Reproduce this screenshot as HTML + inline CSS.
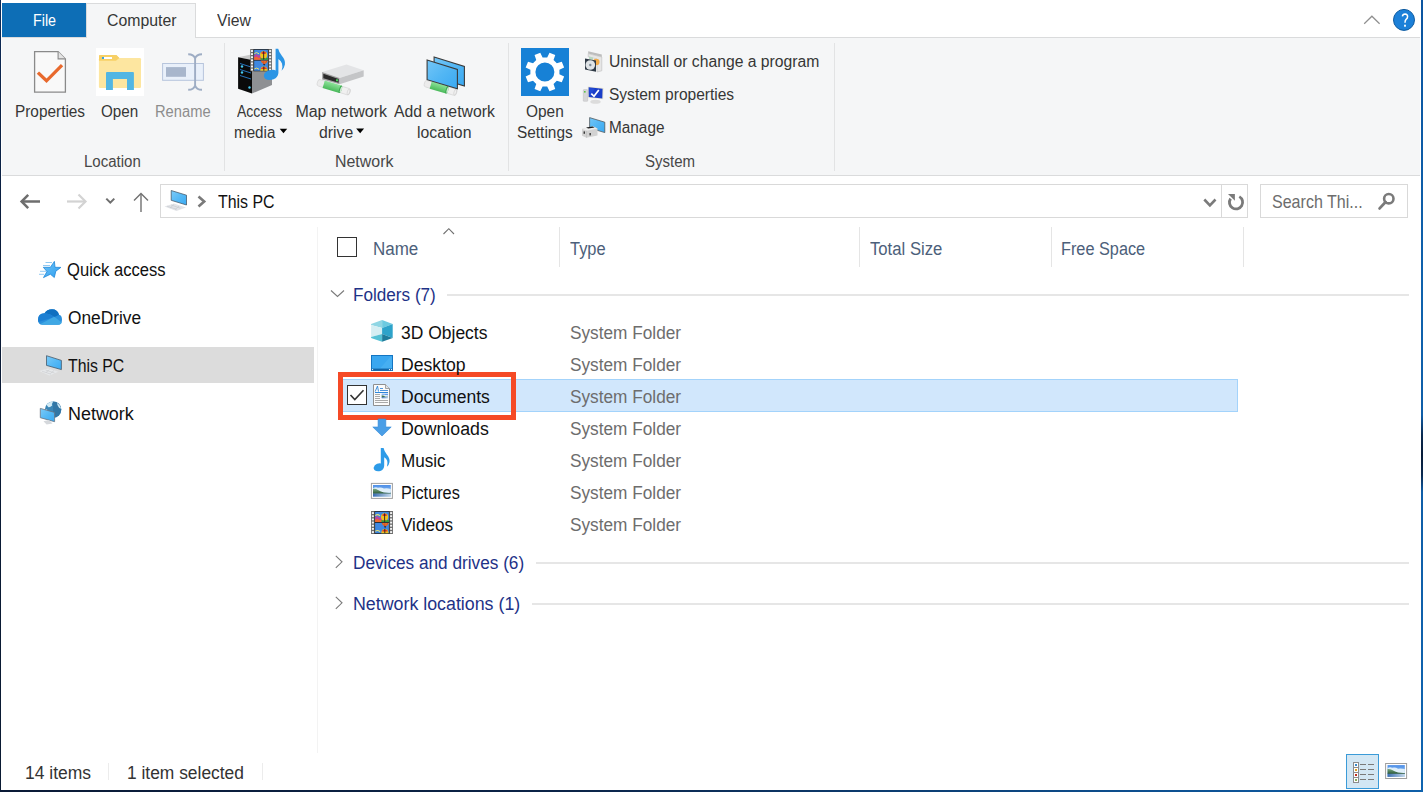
<!DOCTYPE html>
<html><head><meta charset="utf-8"><style>
*{margin:0;padding:0;box-sizing:border-box}
html,body{width:1423px;height:792px;overflow:hidden}
body{position:relative;background:#0d5aa0;font-family:"Liberation Sans",sans-serif}
.a{position:absolute}
.t{position:absolute;white-space:nowrap;transform-origin:0 0}
svg{position:absolute;overflow:visible}

</style></head><body>
<!-- desktop edges -->
<div class="a" style="left:0;top:0;width:1px;height:792px;background:linear-gradient(180deg,#0f2c58 0px,#0b2246 150px,#0a1a36 300px,#0a1a33 792px)"></div>
<div class="a" style="left:0;top:790px;width:1423px;height:2px;background:linear-gradient(90deg,#0a1a36 0%,#0b2448 40%,#0d4f8f 80%,#0f5fa8 100%)"></div>
<div class="a" style="left:1421px;top:0;width:2px;height:792px;background:linear-gradient(180deg,#0b55a0 0px,#0f62ad 300px,#0f5ea8 415px,#0a2a50 435px,#071c38 455px,#0a2a50 475px,#0f5ea8 492px,#0f64b0 792px)"></div>
<!-- window -->
<div class="a" style="left:1px;top:0;width:1420px;height:790px;background:#ffffff"></div>
<!-- tab bar line -->
<div class="a" style="left:2px;top:37px;width:1418px;height:1px;background:#dadbdc"></div>
<!-- ribbon -->
<div class="a" style="left:2px;top:38px;width:1418px;height:137px;background:#f5f6f7"></div>
<div class="a" style="left:2px;top:175px;width:1418px;height:1px;background:#dadbdc"></div>
<!-- File tab -->
<div class="a" style="left:2px;top:3px;width:84px;height:34px;background:#0d6eb6"></div>
<!-- Computer tab -->
<div class="a" style="left:86px;top:3px;width:110px;height:35px;background:#f5f6f7;border:1px solid #dadbdc;border-bottom:none"></div>
<!-- ribbon separators -->
<div class="a" style="left:224px;top:43px;width:1px;height:128px;background:#e2e3e4"></div>
<div class="a" style="left:508px;top:43px;width:1px;height:128px;background:#e2e3e4"></div>
<div class="a" style="left:834px;top:43px;width:1px;height:128px;background:#e2e3e4"></div>
<!-- address box -->
<div class="a" style="left:160px;top:184px;width:1088px;height:34px;border:1px solid #d9d9d9"></div>
<div class="a" style="left:1221px;top:184px;width:1px;height:34px;background:#d9d9d9"></div>
<!-- search box -->
<div class="a" style="left:1260px;top:184px;width:148px;height:34px;border:1px solid #d9d9d9"></div>
<!-- nav separator -->
<div class="a" style="left:317px;top:227px;width:1px;height:526px;background:#f3f3f3"></div>
<!-- nav selection -->
<div class="a" style="left:2px;top:347px;width:312px;height:36px;background:#dcdcdc"></div>
<!-- column dividers -->
<div class="a" style="left:559px;top:227px;width:1px;height:40px;background:#e5e5e5"></div>
<div class="a" style="left:859px;top:227px;width:1px;height:40px;background:#e5e5e5"></div>
<div class="a" style="left:1051px;top:227px;width:1px;height:40px;background:#e5e5e5"></div>
<div class="a" style="left:1243px;top:227px;width:1px;height:40px;background:#e5e5e5"></div>
<!-- header checkbox -->
<div class="a" style="left:337px;top:237px;width:20px;height:20px;border:1.5px solid #333"></div>
<!-- group lines -->
<div class="a" style="left:447px;top:294px;width:962px;height:2px;background:#e6e6e6"></div>
<div class="a" style="left:536px;top:562px;width:873px;height:2px;background:#e6e6e6"></div>
<div class="a" style="left:532px;top:603px;width:877px;height:2px;background:#e6e6e6"></div>
<!-- selection row -->
<div class="a" style="left:338px;top:379px;width:900px;height:33px;background:#d1e7fc;border:1px solid #a3d3fb"></div>
<!-- row checkbox -->
<div class="a" style="left:347px;top:385px;width:20px;height:20px;border:1.5px solid #333;background:#fff"></div>
<svg style="left:0;top:0" width="1" height="1"><path d="M350.5 395 L354.8 399.5 L363.5 390.3" fill="none" stroke="#333" stroke-width="1.6"/></svg>
<!-- red highlight -->
<div class="a" style="left:337.5px;top:371.5px;width:178px;height:48px;border:5px solid #f54a26"></div>
<!-- status bar separators -->
<div class="a" style="left:108px;top:763px;width:1px;height:17px;background:#ececec"></div>
<div class="a" style="left:262px;top:763px;width:1px;height:17px;background:#ececec"></div>
<!-- view buttons -->
<div class="a" style="left:1346px;top:754px;width:33px;height:35px;background:#d3e7f4;border:1px solid #3b9bd8"></div>

<svg style="left:0;top:0" width="1423" height="792" viewBox="0 0 1423 792">
<defs>
<linearGradient id="scr" x1="0" y1="0" x2="1" y2="1"><stop offset="0" stop-color="#74c6f7"/><stop offset="0.5" stop-color="#52b6f4"/><stop offset="1" stop-color="#3aa9f2"/></linearGradient>
<linearGradient id="grn" x1="0" y1="0" x2="0" y2="1"><stop offset="0" stop-color="#8ee39a"/><stop offset="1" stop-color="#49b95a"/></linearGradient>
<linearGradient id="sky" x1="0" y1="0" x2="0" y2="1"><stop offset="0" stop-color="#4d95e6"/><stop offset="0.35" stop-color="#d9ecf6"/><stop offset="0.55" stop-color="#8ab39a"/><stop offset="0.7" stop-color="#3f6f55"/><stop offset="0.8" stop-color="#4b7fb8"/><stop offset="1" stop-color="#9fc3e6"/></linearGradient>
<symbol id="film" viewBox="0 0 22 22.5" preserveAspectRatio="none">
<rect x="0" y="0" width="22" height="22.5" fill="#6f6f6f"/>
<g fill="#f4f4f4">
<rect x="0.9" y="1.1" width="2" height="1.8"/><rect x="0.9" y="4.2" width="2" height="1.8"/><rect x="0.9" y="7.3" width="2" height="1.8"/><rect x="0.9" y="10.4" width="2" height="1.8"/><rect x="0.9" y="13.5" width="2" height="1.8"/><rect x="0.9" y="16.6" width="2" height="1.8"/><rect x="0.9" y="19.7" width="2" height="1.8"/>
<rect x="19.1" y="1.1" width="2" height="1.8"/><rect x="19.1" y="4.2" width="2" height="1.8"/><rect x="19.1" y="7.3" width="2" height="1.8"/><rect x="19.1" y="10.4" width="2" height="1.8"/><rect x="19.1" y="13.5" width="2" height="1.8"/><rect x="19.1" y="16.6" width="2" height="1.8"/><rect x="19.1" y="19.7" width="2" height="1.8"/>
</g>
<rect x="3.4" y="0" width="15.2" height="22.5" fill="#2a2a2a"/>
<rect x="4.1" y="0.8" width="13.8" height="10" fill="#3f88e0"/>
<rect x="4.1" y="11.7" width="13.8" height="10" fill="#3f88e0"/>
<path d="M4.1,10.8 V6.5 Q6,3.5 8,6.5 Q9.5,5 11,7.5 V10.8Z" fill="#c0449a"/>
<path d="M4.1,10.8 V8.5 Q6.5,7 8.5,9 Q10,8 11.5,9.5 V10.8Z" fill="#f06a2a"/>
<path d="M4.3,4.5 Q6.5,2.5 9,4.8" fill="none" stroke="#e8e070" stroke-width="1"/>
<rect x="10.5" y="8.8" width="7.4" height="2" fill="#2f9a3c"/>
<circle cx="13.6" cy="5.9" r="3.6" fill="#f0c21c"/>
<path d="M11.2,3.6 Q13.6,1.6 16,3.6 L15.5,5 H11.7Z" fill="#e23a28"/>
<path d="M13.6,2.3 V9.5" stroke="#222" stroke-width="0.9"/>
<path d="M12.4,9.3 H14.8 L13.6,10.8Z" fill="#222"/>
<path d="M10.8,11.7 H17.9 Q17,14.5 14.2,15.2 Q11.5,14.5 10.8,11.7Z" fill="#e8a020"/>
<path d="M11.5,11.7 L12.5,14 M13.2,11.7 L13.6,15 M15,11.7 L14.8,15 M16.8,11.7 L15.8,14" stroke="#d8302a" stroke-width="0.8"/>
<path d="M13,15 H15.2 L14.1,16.8Z" fill="#222"/>
<path d="M4.3,20 Q6.5,18 9,20.3" fill="none" stroke="#e8e070" stroke-width="1"/>
<path d="M10.2,21.7 Q10.4,17.6 13.8,17.5 Q17.4,17.6 17.6,21.7Z" fill="#f0c21c"/>
<path d="M11,19.2 Q13.8,16.8 16.8,19.2 L16.5,20 H11.3Z" fill="#e23a28"/>
<path d="M13.8,17.5 V21.7" stroke="#222" stroke-width="0.9"/>
</symbol>
</defs>
<!-- ===== Properties ===== -->
<path d="M34.6,51.6 H58.1 L65.4,58.9 V92.2 H34.6 Z" fill="#f9f9f9" stroke="#8a8a8a" stroke-width="1.3"/>
<path d="M58.1,51.6 V58.9 H65.4" fill="#e4e4e4" stroke="#8a8a8a" stroke-width="1.1"/>
<polyline points="39.1,73.8 46.5,80.8 60.9,66.3" fill="none" stroke="#e8692d" stroke-width="3.3" stroke-linecap="square"/>
<!-- ===== Open ===== -->
<rect x="96" y="48" width="48" height="48" fill="#ffffff"/>
<path d="M99,56 Q99,54.9 100,54.9 H116.5 L119.3,57.9 L116.5,60.8 H99 Z" fill="#f7d066"/>
<rect x="98.9" y="58.1" width="42.1" height="29.8" rx="1.2" fill="#fde6a0"/>
<path d="M98.9,58.1 H116.5 L119.3,57.9 L119.3,58.1" fill="none"/>
<path d="M99,55.5 H116 L119.3,58 L116,60.8 H99Z" fill="#f7d066"/>
<rect x="102" y="57" width="10" height="2" fill="#ffffff"/><rect x="102" y="57" width="2" height="2" fill="#3aa3e0"/>
<path d="M106,89.9 V73 Q106,71.9 107,71.9 H133 Q133.9,71.9 133.9,73 V89.9 H127 V79 H112.9 V89.9 Z" fill="#52b6e3"/>
<!-- ===== Rename ===== -->
<rect x="162.6" y="63.5" width="40.8" height="16.8" fill="#e9f0fa" stroke="#b7c5dc" stroke-width="1"/>
<rect x="166" y="67.1" width="20" height="9.7" fill="#a8b6cc"/>
<path d="M188.2,54.2 Q193.8,54.2 195.1,58.5 Q196.4,54.2 202,54.2 M195.1,58 V85.8 M188.2,89.8 Q193.8,89.8 195.1,85.5 Q196.4,89.8 202,89.8" fill="none" stroke="#9eadc4" stroke-width="1.9"/>
<!-- ===== Access media ===== -->
<path d="M238.1,57.3 L258,53 L272,54.5 L252,60 Z" fill="#c9c9c9"/>
<path d="M252,60 L272,54.5 V85 L252,93.5 Z" fill="#8e9093"/>
<path d="M238.1,57.3 L252,60 V93.5 L238.1,88.7 Z" fill="#0a0a0a"/>
<path d="M240,63.5 L251,67 M240,69.5 L251,73 M240,75.5 L251,79" stroke="#2a7fd0" stroke-width="0.9"/>
<circle cx="242" cy="66.5" r="1.2" fill="#45c8f0"/><circle cx="242" cy="72.5" r="1.2" fill="#45c8f0"/><circle cx="249.5" cy="87.5" r="1.2" fill="#45c8f0"/>
<use href="#film" x="250.1" y="49" width="21.9" height="22.5"/>
<path d="M275.6,48.8 H278.2 Q279,52.5 282,56 Q285.6,60 284.9,64.6 Q284.3,68.2 281.6,70.8 Q283,66.5 282,63.5 Q281,60.8 278.4,59 V73 Q278,77.6 273.6,79.3 Q268.6,80.9 265.2,78.7 Q262.5,75.9 265.2,72.6 Q268.3,69.6 273,69.8 Q274.6,69.9 275.6,70.4 Z" fill="#2b95e5"/>
<!-- ===== Map network drive ===== -->
<g transform="translate(317.5,82.3) rotate(17)">
<rect x="0" y="-3.3" width="7.5" height="6.6" rx="2" fill="#ececec" stroke="#d2d2d2" stroke-width="0.6"/>
<rect x="23" y="-3.3" width="11" height="6.6" rx="2.2" fill="#f0f0f0" stroke="#d2d2d2" stroke-width="0.6"/>
<ellipse cx="32.5" cy="0" rx="1.2" ry="3" fill="none" stroke="#cfcfcf" stroke-width="0.6"/>
<rect x="6.5" y="-3.9" width="17.5" height="7.8" fill="url(#grn)"/>
<ellipse cx="24" cy="0" rx="1.3" ry="3.9" fill="#3aa84d"/>
<ellipse cx="24.6" cy="0" rx="0.9" ry="3.2" fill="#cfe8d4"/>
</g>
<path d="M322.1,72 L346.5,64.4 L363.7,70.2 L339.6,77.9 Z" fill="#e3e4e6"/>
<path d="M339.6,77.9 L363.7,70.2 V76.6 L339.6,84.2 Z" fill="#c4c5c7"/>
<path d="M322.1,72 L339.6,77.9 V84.2 L322.1,79.5 Z" fill="#a0a0a0"/>
<path d="M323.3,73.8 L338.6,78.9 V82.8 L323.3,78.2 Z" fill="#2a2a2a"/>
<rect x="336" y="79.3" width="2" height="2" fill="#46d35a"/>
<!-- ===== Add network location ===== -->
<path d="M434.1,57 L464.4,66.4 V86.1 L434.1,76.8 Z" fill="url(#scr)" stroke="#3a3a3a" stroke-width="1.1"/>
<g transform="translate(424.5,83.2) rotate(16.5)">
<rect x="0" y="-3.3" width="7.5" height="6.6" rx="2" fill="#ececec" stroke="#d2d2d2" stroke-width="0.6"/>
<rect x="22.5" y="-3.3" width="11.0" height="6.6" rx="2.2" fill="#f0f0f0" stroke="#d2d2d2" stroke-width="0.6"/>
<ellipse cx="32.0" cy="0" rx="1.2" ry="3" fill="none" stroke="#cfcfcf" stroke-width="0.6"/>
<rect x="6.5" y="-3.9" width="17.0" height="7.8" fill="url(#grn)"/>
<ellipse cx="23.5" cy="0" rx="1.3" ry="3.9" fill="#3aa84d"/>
<ellipse cx="24.1" cy="0" rx="0.9" ry="3.2" fill="#cfe8d4"/>
</g>
<path d="M427.1,60 L457.4,69.4 V88.8 L427.1,79.7 Z" fill="url(#scr)" stroke="#3a3a3a" stroke-width="1.1"/>
<!-- ===== Settings ===== -->
<rect x="521" y="48" width="48" height="48" fill="#1781d6"/>
<path d="M559.42,74.30 L564.15,76.62 L561.78,82.35 L556.79,80.64 L553.54,83.89 L555.25,88.88 L549.52,91.25 L547.20,86.52 L542.60,86.52 L540.28,91.25 L534.55,88.88 L536.26,83.89 L533.01,80.64 L528.02,82.35 L525.65,76.62 L530.38,74.30 L530.38,69.70 L525.65,67.38 L528.02,61.65 L533.01,63.36 L536.26,60.11 L534.55,55.12 L540.28,52.75 L542.60,57.48 L547.20,57.48 L549.52,52.75 L555.25,55.12 L553.54,60.11 L556.79,63.36 L561.78,61.65 L564.15,67.38 L559.42,69.70Z M554.40,72 A9.5,9.5 0 1 0 535.40,72 A9.5,9.5 0 1 0 554.40,72Z" fill="#ffffff" fill-rule="evenodd"/>
<!-- ===== Uninstall ===== -->
<path d="M588.2,51.2 L601.8,54.6 L601.8,57 L588.2,53.6Z" fill="#bdbdbd"/>
<path d="M588.2,53.6 L601.8,57 V70.8 L597,72 V59 L588.2,56.8Z" fill="#e6e6e6" stroke="#b4b4b4" stroke-width="0.5"/>
<path d="M589,56.6 L593,57.5 L593,60 L589,59Z" fill="#b8d8c0"/>
<circle cx="596.2" cy="62" r="3.3" fill="#f2aa48"/>
<path d="M585,58.4 L596,60.6 V71.8 L585,69.4Z" fill="#2f3a46"/>
<circle cx="590.3" cy="65" r="4.8" fill="#dfe3e6"/>
<circle cx="590.3" cy="65" r="1.2" fill="#7d8a96"/>
<!-- ===== System properties ===== -->
<rect x="583.3" y="89.6" width="4.4" height="11.7" rx="0.6" fill="#d6d6d8" stroke="#b0b0b0" stroke-width="0.4"/>
<rect x="584" y="91" width="1.6" height="1.6" fill="#5cc048"/>
<ellipse cx="595.5" cy="101.8" rx="5.2" ry="2" fill="#dcdcdc"/>
<path d="M587.8,86.4 L603.6,88 L603.2,99.3 L588,97.8Z" fill="#e9e5d2"/>
<path d="M588.6,87.3 L602.6,88.7 L602.3,98.4 L588.7,97Z" fill="#1a3ec8"/>
<path d="M589,88 L595,88.6 L590,96Z" fill="#2a55e0" opacity="0.5"/>
<polyline points="591.3,93.6 594,96.3 598.8,89.9" fill="none" stroke="#ffffff" stroke-width="1.7"/>
<!-- ===== Manage ===== -->
<path d="M589.6,117.6 L604.8,122.2 V132.6 L589.6,128Z" fill="url(#scr)" stroke="#4a4a4a" stroke-width="0.7"/>
<path d="M582,128.8 L593,126.6 L597.5,128.6 V135.6 L586.5,137.8 L582,135.8Z" fill="#d2d2d2"/>
<path d="M582,128.8 L593,126.6 L597.5,128.6 L586.5,130.8Z" fill="#ededed"/>
<path d="M586,127.6 L592.6,126.4 L594.6,127.4 L588.2,128.6Z" fill="#1a1a1a"/>
<path d="M586.5,130.8 V137.8" stroke="#b8b8b8" stroke-width="0.5"/>
<rect x="583.6" y="131.4" width="1.3" height="2.4" fill="#2a2a2a"/><rect x="589.5" y="133" width="1.3" height="2.4" fill="#2a2a2a"/>
<!-- ===== collapse chevron & help ===== -->
<polyline points="1364.2,23.8 1371.9,16.2 1379.6,23.8" fill="none" stroke="#8f8f8f" stroke-width="1.2"/>
<circle cx="1404" cy="19.9" r="10.5" fill="#1c80d8" stroke="#0d5aa0" stroke-width="1"/>
<!-- ===== address bar ===== -->
<polyline points="28.2,194.8 21.6,201.5 28.2,208.2" fill="none" stroke="#6e6e6e" stroke-width="2.5"/>
<line x1="22" y1="201.5" x2="40" y2="201.5" stroke="#6e6e6e" stroke-width="2.5"/>
<polyline points="78.5,194.5 85.5,201.5 78.5,208.5" fill="none" stroke="#d3d3d3" stroke-width="2.2"/>
<line x1="67" y1="201.5" x2="85" y2="201.5" stroke="#d3d3d3" stroke-width="2.2"/>
<polyline points="106.3,198.6 110.3,202.6 114.3,198.6" fill="none" stroke="#6e6e6e" stroke-width="2"/>
<polyline points="134,200.5 141,193.5 148,200.5" fill="none" stroke="#707070" stroke-width="1.4"/>
<line x1="141" y1="194" x2="141" y2="212" stroke="#707070" stroke-width="1.4"/>
<polyline points="198.5,196.5 204.2,201.5 198.5,206.5" fill="none" stroke="#7a7a7a" stroke-width="2.6"/>
<polyline points="1204.3,199.5 1209.9,205.3 1215.5,199.5" fill="none" stroke="#7a7a7a" stroke-width="2.6"/>
<path d="M1239.3,196.6 A6.6,6.6 0 1 1 1230.6,198.6" fill="none" stroke="#7a7a7a" stroke-width="2.8"/>
<path d="M1228,194 H1234.9 V200.8 Z" fill="#7a7a7a"/>
<circle cx="1388.8" cy="198.7" r="4.7" fill="none" stroke="#7a7a7a" stroke-width="2.6"/>
<line x1="1385.6" y1="202" x2="1379.6" y2="208.4" stroke="#7a7a7a" stroke-width="2.8" stroke-linecap="round"/>
</svg>

<svg style="left:0;top:0" width="1423" height="792" viewBox="0 0 1423 792">
<defs>
<linearGradient id="scr2" x1="0" y1="0" x2="1" y2="1"><stop offset="0" stop-color="#7ccbf8"/><stop offset="0.5" stop-color="#56b9f5"/><stop offset="1" stop-color="#3aaaf3"/></linearGradient>
<linearGradient id="pic" x1="0" y1="0" x2="0" y2="1"><stop offset="0" stop-color="#4f95e4"/><stop offset="0.3" stop-color="#cfe6f5"/><stop offset="0.5" stop-color="#7fa88f"/><stop offset="0.62" stop-color="#3b6a52"/><stop offset="0.72" stop-color="#3d74b0"/><stop offset="1" stop-color="#a6c8e8"/></linearGradient>
<linearGradient id="star" x1="0" y1="0" x2="1" y2="1"><stop offset="0" stop-color="#6cc2f6"/><stop offset="1" stop-color="#2f9ff0"/></linearGradient>
<linearGradient id="skyg" x1="0" y1="0" x2="0" y2="1"><stop offset="0" stop-color="#4e8fe8"/><stop offset="1" stop-color="#a8d2f4"/></linearGradient>
<linearGradient id="hillg" x1="0" y1="0" x2="0" y2="1"><stop offset="0" stop-color="#78a882"/><stop offset="1" stop-color="#2a5636"/></linearGradient>
<linearGradient id="waterg" x1="0" y1="0" x2="1" y2="0"><stop offset="0" stop-color="#3a6cb0"/><stop offset="1" stop-color="#c4d8ea"/></linearGradient>
<symbol id="land" viewBox="0 0 18 12" preserveAspectRatio="none">
<rect x="0" y="0" width="18" height="12" fill="url(#skyg)"/>
<path d="M0,3.5 Q2.5,1.5 5,2.8 Q8,2 11,3.6 Q14.5,3 18,4 V8 H0Z" fill="#eaf5fb" opacity="0.9"/>
<path d="M0,4 Q2.5,3.6 5,5 Q8,7 11,7.6 Q14.5,8.2 18,8 V9 H0Z" fill="url(#hillg)"/>
<rect x="0" y="8.8" width="18" height="3.2" fill="url(#waterg)"/>
</symbol>
</defs>
<!-- dropdown triangles -->
<path d="M279.7,128.8 H287.2 L283.45,133.3Z" fill="#000"/>
<path d="M356.2,128.6 H364.1 L360.15,133.2Z" fill="#000"/>
<!-- help ? -->
<path d="M1402.4,16.4 Q1402.7,14 1405.1,14 Q1407.6,14.1 1407.6,16.6 Q1407.6,18.3 1406.1,19.4 Q1405,20.3 1405,22.7" fill="none" stroke="#fff" stroke-width="1.5"/>
<rect x="1404.1" y="24.7" width="1.8" height="2" fill="#fff"/>
<!-- address PC icon -->
<path d="M171.2,190.5 L186.5,195.2 V205 L171.2,200.3Z" fill="url(#scr2)" stroke="#3a4a5a" stroke-width="0.7"/>
<path d="M164.5,206.5 L174,203.5 L186,207.5 L176.5,211 Z" fill="#e2e4e8"/>
<path d="M167,206.2 L176.5,209.3 M171,205 L180.5,208.2 M170,208 L174,204.5 M175,209.7 L179,206" stroke="#c5c8cc" stroke-width="0.6"/>
<!-- sort arrow -->
<polyline points="443.5,234 448.8,228.7 454,234" fill="none" stroke="#707070" stroke-width="1.1"/>
<!-- group chevrons -->
<polyline points="331,290.5 337.5,296.5 344,290.5" fill="none" stroke="#7a7a7a" stroke-width="1.1"/>
<polyline points="335.8,555.8 342,561.8 335.8,567.8" fill="none" stroke="#7a7a7a" stroke-width="1.1"/>
<polyline points="335.8,596.8 342,602.8 335.8,608.8" fill="none" stroke="#7a7a7a" stroke-width="1.1"/>
<!-- ===== nav icons ===== -->
<g stroke="#69b5ee" stroke-width="0.9" opacity="0.8">
<line x1="45.5" y1="262.5" x2="52" y2="262.5"/><line x1="43" y1="265.5" x2="50" y2="265.5"/>
<line x1="40" y1="271.3" x2="46.5" y2="271.3"/><line x1="39" y1="274.3" x2="44" y2="274.3"/></g>
<path d="M54.4,261.4 L55,267.3 L60.9,267.4 L55.8,271.2 L54.3,277.5 L50.4,274.2 L43.5,277.6 L47,271.5 L43.3,267.3 L50.4,267.3 Z" fill="url(#star)" stroke="#1e86d8" stroke-width="0.8" stroke-linejoin="round"/>
<!-- OneDrive -->
<path d="M42.5,324.8 Q38,324.8 38,319.8 Q38,313.5 44.5,313.2 Q47,309.3 52,309.3 Q57.5,309.3 59,314.8 Q62,315.5 62,319.8 Q62,324.8 57.5,324.8 Z" fill="#2a8fdb"/>
<path d="M44.5,313.2 Q47,309.3 52,309.3 Q57.5,309.3 59,314.8 L54.5,317 Q50,313.5 44.5,313.2Z" fill="#0f6fc0"/>
<path d="M38.5,322 Q38,320.5 38,319.8 Q38,313.5 44.5,313.2 Q50,313.5 54.5,317 Z" fill="#1c7fd3"/>
<path d="M40.5,324 L54.2,316.8 L61.8,322.5 Q61,324.8 57.5,324.8 H42.5 Z" fill="#40a8e4"/>
<!-- This PC nav -->
<path d="M46.5,355.7 L61.4,360.4 V369.6 L46.5,365.4Z" fill="url(#scr2)" stroke="#3a4a5a" stroke-width="0.7"/>
<path d="M39,371 L48,368.5 L58.5,371.8 L49.5,375.5 Z" fill="#e6e8ea"/>
<path d="M42,371.2 L51,374.2 M45.5,370 L54.5,373 M46,372.5 L49.5,369.5 M50.5,373.5 L54,370.5" stroke="#c8cacc" stroke-width="0.6"/>
<!-- Network nav -->
<circle cx="53.1" cy="409.6" r="8.2" fill="#3b86b6"/>
<path d="M53.1,401.4 A8.2,8.2 0 0 1 61.3,409.6 A8.2,8.2 0 0 1 53.1,417.8Z" fill="#2f6f9e" opacity="0.7"/>
<path d="M46.5,404.6 Q49.5,401.6 53.2,401.5 Q51.5,403.6 52.2,405.6 Q50,407.6 48.5,407.2 Q47.2,406.2 46.5,404.6Z" fill="#d3ebf5"/>
<path d="M57,402.8 Q60.2,404.8 61.2,408.4 Q59.2,408.8 58.3,406.6 Q57.2,405 57,402.8Z" fill="#cfe8f3"/>
<path d="M45.3,409.5 Q46.5,409 47.5,410 L46.8,411.5Z" fill="#cfe8f3"/>
<path d="M40.3,408.4 L54.6,412.4 V421.7 L40.3,417.7Z" fill="url(#scr2)" stroke="#6a7480" stroke-width="0.8"/>
<path d="M43.5,421.3 L49,419.9 L52.5,423.6 L46.6,424.6Z" fill="#d5d8dc"/>
<!-- ===== file icons ===== -->
<path d="M371.1,324 L382.1,320 L382.1,328 L371.1,325Z" fill="#8fd6e4"/>
<path d="M382.1,320 L392.7,324 L382.1,328Z" fill="#6ccae0"/>
<path d="M371.1,325 L382.1,328 L382.1,334 L371.1,337Z" fill="#d5eef3"/>
<path d="M382.1,328 L392.7,324 L392.7,338 L382.1,334Z" fill="#2da3ca"/>
<path d="M371.1,337 L382.1,334 L382.1,341.8 L371.1,338Z" fill="#55c1d5"/>
<path d="M382.1,334 L392.7,338 L382.1,341.8Z" fill="#1e7c9b"/>
<!-- desktop -->
<rect x="371.5" y="355.5" width="21" height="15" fill="#3aa7f0" stroke="#1475c2" stroke-width="1"/>
<path d="M380,368.5 L390,357 H392 V368.5Z" fill="#4fb4f4" opacity="0.6"/>
<rect x="371.5" y="368.6" width="21" height="2" fill="#1565a6"/>
<circle cx="372.6" cy="369.6" r="0.6" fill="#fff"/><circle cx="389.5" cy="369.6" r="0.6" fill="#fff"/><circle cx="391.5" cy="369.6" r="0.6" fill="#fff"/>
<!-- doc icon -->
<path d="M373.5,384.5 H385.5 L389.5,388.5 V405.5 H373.5 Z" fill="#fbfbfb" stroke="#8f8f8f" stroke-width="1"/>
<path d="M385.5,384.5 V388.5 H389.5" fill="#e2e2e2" stroke="#8f8f8f" stroke-width="0.8"/>
<path d="M375.2,391.5 L377.5,386 L378.5,391.5" fill="none" stroke="#2f86d8" stroke-width="0.9"/>
<rect x="380" y="388" width="3" height="1" fill="#4f95dc"/>
<rect x="380" y="390" width="8" height="1" fill="#4f95dc"/>
<rect x="375" y="392" width="13" height="1" fill="#2f86d8"/>
<g fill="#a9a9a9"><rect x="375" y="394" width="5" height="1"/><rect x="375" y="396" width="5" height="1"/><rect x="375" y="398" width="5" height="1"/><rect x="375" y="400" width="13" height="1"/><rect x="375" y="402" width="13" height="1"/></g>
<use href="#land" x="381.5" y="393.5" width="6.5" height="5"/>
<!-- downloads -->
<path d="M378.1,419 H385.8 V427 H391.2 L382,436 L372.8,427 H378.1Z" fill="#4a9ee6" stroke="#2f86d6" stroke-width="0.6"/>
<!-- music -->
<path d="M380.8,448 H383.6 Q384.3,451.5 386.8,454.5 Q390,458.2 389.5,462 Q389.1,465 386.9,466.8 Q388,463.2 387.2,460.8 Q386.4,458.6 384.2,457.2 V465.8 Q384,469.8 380.3,471 Q376.4,471.8 374.4,470 Q372.8,467.6 374.8,465.2 Q377.2,463 380.8,463.4 Z" fill="#2d9be8"/>
<!-- pictures -->
<rect x="371.4" y="483.4" width="21" height="15" fill="#fff" stroke="#a0a0a0" stroke-width="1"/>
<use href="#land" x="373" y="485" width="17.9" height="11.8"/>
<!-- videos -->
<use href="#film" x="371" y="511" width="22" height="23"/>
<!-- ===== view buttons ===== -->
<rect x="1353" y="762" width="6" height="21" fill="#8c8c8c"/>
<rect x="1354" y="763" width="4" height="4" fill="#fff"/><rect x="1354" y="768" width="4" height="4" fill="#fff"/><rect x="1354" y="773" width="4" height="4" fill="#fff"/><rect x="1354" y="778" width="4" height="4" fill="#fff"/>
<rect x="1355" y="764" width="2" height="2" fill="#3a8ac8"/><rect x="1355" y="769" width="2" height="2" fill="#e0a020"/><rect x="1355" y="774" width="2" height="2" fill="#c03020"/><rect x="1355" y="779" width="2" height="2" fill="#88b060"/>
<g fill="#7a7a7a"><rect x="1360" y="764" width="6" height="1"/><rect x="1368" y="764" width="6" height="1"/><rect x="1360" y="769" width="6" height="1"/><rect x="1368" y="769" width="6" height="1"/><rect x="1360" y="774" width="6" height="1"/><rect x="1368" y="774" width="6" height="1"/><rect x="1360" y="779" width="6" height="1"/><rect x="1368" y="779" width="6" height="1"/></g>
<rect x="1385.6" y="763.5" width="21" height="15" fill="#fff" stroke="#9d9d9d" stroke-width="1"/>
<use href="#land" x="1387.3" y="765.1" width="17.6" height="11.8"/>
</svg>

<div class="t" style="left:33.00px;top:13px;font-size:16px;line-height:16px;color:#ffffff;transform:scaleX(0.8932);">File</div>
<div class="t" style="left:106.50px;top:13px;font-size:16px;line-height:16px;color:#363636;transform:scaleX(0.9893);">Computer</div>
<div class="t" style="left:217.00px;top:13px;font-size:16px;line-height:16px;color:#363636;transform:scaleX(0.9855);">View</div>
<div class="t" style="left:14.60px;top:104px;font-size:16px;line-height:16px;color:#363636;transform:scaleX(0.9605);">Properties</div>
<div class="t" style="left:100.50px;top:104px;font-size:16px;line-height:16px;color:#363636;transform:scaleX(0.9508);">Open</div>
<div class="t" style="left:155.00px;top:104px;font-size:16px;line-height:16px;color:#8d8d8d;transform:scaleX(0.9190);">Rename</div>
<div class="t" style="left:237.20px;top:104px;font-size:16px;line-height:16px;color:#363636;transform:scaleX(0.8755);">Access</div>
<div class="t" style="left:233.80px;top:125px;font-size:16px;line-height:16px;color:#363636;transform:scaleX(0.9490);">media</div>
<div class="t" style="left:295.40px;top:104px;font-size:16px;line-height:16px;color:#363636;">Map network</div>
<div class="t" style="left:318.80px;top:125px;font-size:16px;line-height:16px;color:#363636;transform:scaleX(0.9848);">drive</div>
<div class="t" style="left:394.20px;top:104px;font-size:16px;line-height:16px;color:#363636;transform:scaleX(0.9856);">Add a network</div>
<div class="t" style="left:417.30px;top:125px;font-size:16px;line-height:16px;color:#363636;transform:scaleX(0.9868);">location</div>
<div class="t" style="left:526.30px;top:104px;font-size:16px;line-height:16px;color:#363636;transform:scaleX(0.9636);">Open</div>
<div class="t" style="left:517.20px;top:125px;font-size:16px;line-height:16px;color:#363636;transform:scaleX(0.9624);">Settings</div>
<div class="t" style="left:609.40px;top:54px;font-size:16px;line-height:16px;color:#363636;transform:scaleX(0.9810);">Uninstall or change a program</div>
<div class="t" style="left:609.40px;top:87px;font-size:16px;line-height:16px;color:#363636;transform:scaleX(0.9705);">System properties</div>
<div class="t" style="left:609.40px;top:120px;font-size:16px;line-height:16px;color:#363636;transform:scaleX(0.9590);">Manage</div>
<div class="t" style="left:84.40px;top:154px;font-size:16px;line-height:16px;color:#474747;transform:scaleX(0.9388);">Location</div>
<div class="t" style="left:335.10px;top:154px;font-size:16px;line-height:16px;color:#474747;transform:scaleX(0.9957);">Network</div>
<div class="t" style="left:644.60px;top:154px;font-size:16px;line-height:16px;color:#474747;transform:scaleX(0.9386);">System</div>
<div class="t" style="left:217.90px;top:193px;font-size:18.5px;line-height:18.5px;color:#111111;transform:scaleX(0.8593);">This PC</div>
<div class="t" style="left:1271.60px;top:193px;font-size:18.5px;line-height:18.5px;color:#6d6d6d;transform:scaleX(0.8670);">Search Thi...</div>
<div class="t" style="left:373.20px;top:240px;font-size:18px;line-height:18px;color:#4c607a;transform:scaleX(0.9438);">Name</div>
<div class="t" style="left:570.30px;top:240px;font-size:18px;line-height:18px;color:#4c607a;transform:scaleX(0.9128);">Type</div>
<div class="t" style="left:869.50px;top:240px;font-size:18px;line-height:18px;color:#4c607a;transform:scaleX(0.9269);">Total Size</div>
<div class="t" style="left:1061.40px;top:240px;font-size:18px;line-height:18px;color:#4c607a;transform:scaleX(0.9043);">Free Space</div>
<div class="t" style="left:353.10px;top:286px;font-size:18px;line-height:18px;color:#1e3287;transform:scaleX(0.9517);">Folders (7)</div>
<div class="t" style="left:353.30px;top:554px;font-size:18px;line-height:18px;color:#1e3287;transform:scaleX(0.9558);">Devices and drives (6)</div>
<div class="t" style="left:353.30px;top:595px;font-size:18px;line-height:18px;color:#1e3287;transform:scaleX(0.9892);">Network locations (1)</div>
<div class="t" style="left:401.00px;top:324px;font-size:18px;line-height:18px;color:#111;transform:scaleX(0.9708);">3D Objects</div>
<div class="t" style="left:401.40px;top:356px;font-size:18px;line-height:18px;color:#111;transform:scaleX(0.9788);">Desktop</div>
<div class="t" style="left:401.40px;top:388px;font-size:18px;line-height:18px;color:#111;transform:scaleX(0.9758);">Documents</div>
<div class="t" style="left:401.40px;top:420px;font-size:18px;line-height:18px;color:#111;transform:scaleX(0.9854);">Downloads</div>
<div class="t" style="left:401.40px;top:452px;font-size:18px;line-height:18px;color:#111;transform:scaleX(0.9489);">Music</div>
<div class="t" style="left:401.40px;top:484px;font-size:18px;line-height:18px;color:#111;transform:scaleX(0.9046);">Pictures</div>
<div class="t" style="left:401.00px;top:516px;font-size:18px;line-height:18px;color:#111;transform:scaleX(0.9516);">Videos</div>
<div class="t" style="left:67.40px;top:261px;font-size:18px;line-height:18px;color:#111;transform:scaleX(0.9215);">Quick access</div>
<div class="t" style="left:67.50px;top:309px;font-size:18px;line-height:18px;color:#111;transform:scaleX(0.9605);">OneDrive</div>
<div class="t" style="left:67.50px;top:357px;font-size:18px;line-height:18px;color:#111;transform:scaleX(0.8781);">This PC</div>
<div class="t" style="left:67.50px;top:405px;font-size:18px;line-height:18px;color:#111;transform:scaleX(0.9966);">Network</div>
<div class="t" style="left:25.20px;top:764px;font-size:18px;line-height:18px;color:#333333;transform:scaleX(0.9706);">14 items</div>
<div class="t" style="left:127.30px;top:764px;font-size:18px;line-height:18px;color:#333333;transform:scaleX(0.9659);">1 item selected</div>
<div class="t" style="left:569.60px;top:324px;font-size:18px;line-height:18px;color:#6d6d6d;transform:scaleX(0.9569);">System Folder</div>
<div class="t" style="left:569.60px;top:356px;font-size:18px;line-height:18px;color:#6d6d6d;transform:scaleX(0.9569);">System Folder</div>
<div class="t" style="left:569.60px;top:388px;font-size:18px;line-height:18px;color:#6d6d6d;transform:scaleX(0.9569);">System Folder</div>
<div class="t" style="left:569.60px;top:420px;font-size:18px;line-height:18px;color:#6d6d6d;transform:scaleX(0.9569);">System Folder</div>
<div class="t" style="left:569.60px;top:452px;font-size:18px;line-height:18px;color:#6d6d6d;transform:scaleX(0.9569);">System Folder</div>
<div class="t" style="left:569.60px;top:484px;font-size:18px;line-height:18px;color:#6d6d6d;transform:scaleX(0.9569);">System Folder</div>
<div class="t" style="left:569.60px;top:516px;font-size:18px;line-height:18px;color:#6d6d6d;transform:scaleX(0.9569);">System Folder</div>
</body></html>
